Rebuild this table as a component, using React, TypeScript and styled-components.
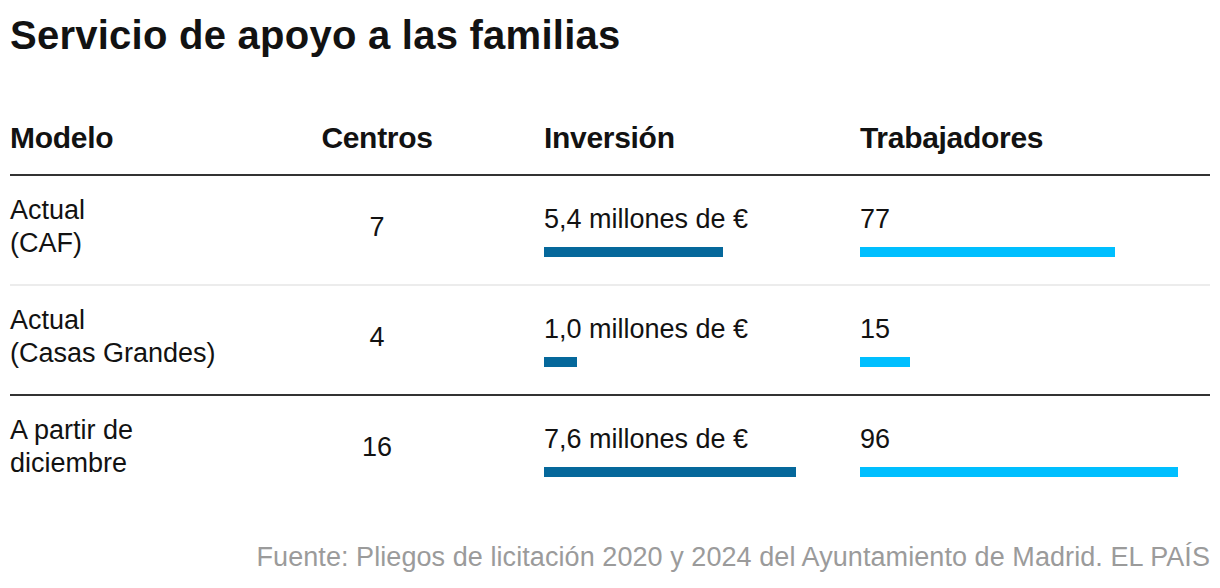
import React from "react";
import styled, { createGlobalStyle } from "styled-components";

const GlobalStyle = createGlobalStyle`
  html, body {
    margin: 0;
    padding: 0;
    background: #ffffff;
  }
  body {
    font-family: "Liberation Sans", Arial, sans-serif;
    color: #121212;
  }
`;

const Page = styled.div`
  width: 1220px;
  padding: 11px 10px 0 10px;
  box-sizing: border-box;
`;

const Title = styled.h1`
  margin: 0;
  font-size: 40px;
  line-height: 48px;
  font-weight: 700;
  color: #121212;
  letter-spacing: 0.25px;
`;

const Table = styled.div`
  margin-top: 61px;
  display: flex;
  flex-direction: column;
`;

const GRID = "300px 134px 416px 1fr";

const HeaderRow = styled.div`
  display: grid;
  grid-template-columns: ${GRID};
  padding-bottom: 18px;
  border-bottom: 2px solid #333333;
`;

const HeadCell = styled.div<{ $center?: boolean; $indent?: boolean }>`
  font-size: 30px;
  line-height: 36px;
  font-weight: 700;
  color: #121212;
  letter-spacing: -0.3px;
  text-align: ${(p) => (p.$center ? "center" : "left")};
  padding-left: ${(p) => (p.$indent ? "100px" : "0")};
`;

const Row = styled.div<{ $divider: "light" | "dark" | "none" }>`
  display: grid;
  grid-template-columns: ${GRID};
  align-items: center;
  padding: 18px 0 24px 0;
  border-bottom: ${(p) =>
    p.$divider === "light"
      ? "2px solid #ececec"
      : p.$divider === "dark"
      ? "2px solid #333333"
      : "none"};
`;

const TextCell = styled.div`
  font-size: 27px;
  line-height: 33px;
  color: #121212;
`;

const NumberCell = styled.div`
  font-size: 27px;
  line-height: 33px;
  text-align: center;
  color: #121212;
`;

const BarCell = styled.div<{ $indent?: boolean }>`
  display: flex;
  flex-direction: column;
  align-items: flex-start;
  gap: 11px;
  padding-top: 6px;
  padding-left: ${(p) => (p.$indent ? "100px" : "0")};
`;

const BarLabel = styled.div`
  font-size: 27px;
  line-height: 33px;
  color: #121212;
  white-space: nowrap;
`;

const Bar = styled.div<{ $tone: "dark" | "light" }>`
  height: 10px;
  background: ${(p) => (p.$tone === "dark" ? "#05689b" : "#00bfff")};
`;

const Footer = styled.div`
  margin-top: 37px;
  font-size: 27px;
  line-height: 33px;
  color: #9b9b9b;
  text-align: right;
  letter-spacing: 0.07px;
`;

type Item = {
  model: string[];
  centros: number;
  inversion: number;
  inversionLabel: string;
  trabajadores: number;
  divider: "light" | "dark" | "none";
};

const data: Item[] = [
  {
    model: ["Actual", "(CAF)"],
    centros: 7,
    inversion: 5.4,
    inversionLabel: "5,4 millones de €",
    trabajadores: 77,
    divider: "light",
  },
  {
    model: ["Actual", "(Casas Grandes)"],
    centros: 4,
    inversion: 1.0,
    inversionLabel: "1,0 millones de €",
    trabajadores: 15,
    divider: "dark",
  },
  {
    model: ["A partir de", "diciembre"],
    centros: 16,
    inversion: 7.6,
    inversionLabel: "7,6 millones de €",
    trabajadores: 96,
    divider: "none",
  },
];

const INV_MAX = 7.6;
const INV_PX = 252;
const TRAB_MAX = 96;
const TRAB_PX = 318;

export default function App() {
  return (
    <>
      <GlobalStyle />
      <Page>
        <Title>Servicio de apoyo a las familias</Title>
        <Table>
          <HeaderRow>
            <HeadCell>Modelo</HeadCell>
            <HeadCell $center>Centros</HeadCell>
            <HeadCell $indent>Inversión</HeadCell>
            <HeadCell>Trabajadores</HeadCell>
          </HeaderRow>
          {data.map((d, i) => (
            <Row key={i} $divider={d.divider}>
              <TextCell>
                {d.model[0]}
                <br />
                {d.model[1]}
              </TextCell>
              <NumberCell>{d.centros}</NumberCell>
              <BarCell $indent>
                <BarLabel>{d.inversionLabel}</BarLabel>
                <Bar
                  $tone="dark"
                  style={{ width: `${Math.round((d.inversion / INV_MAX) * INV_PX)}px` }}
                />
              </BarCell>
              <BarCell>
                <BarLabel>{d.trabajadores}</BarLabel>
                <Bar
                  $tone="light"
                  style={{ width: `${Math.round((d.trabajadores / TRAB_MAX) * TRAB_PX)}px` }}
                />
              </BarCell>
            </Row>
          ))}
        </Table>
        <Footer>
          Fuente: Pliegos de licitación 2020 y 2024 del Ayuntamiento de Madrid. EL PAÍS
        </Footer>
      </Page>
    </>
  );
}
